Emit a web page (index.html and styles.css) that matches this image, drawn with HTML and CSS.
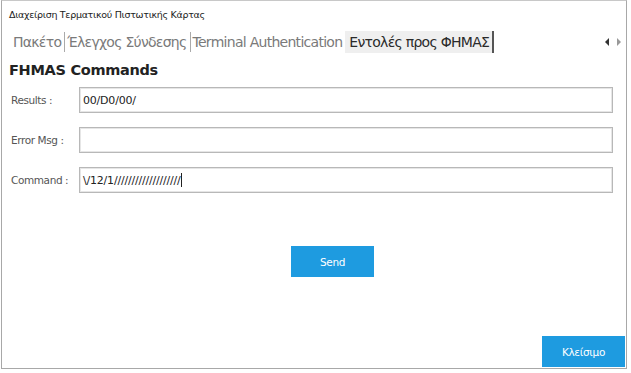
FILE: index.html
```html
<!DOCTYPE html>
<html lang="el">
<head>
  <meta charset="UTF-8" />
  <title>Διαχείριση Τερματικού Πιστωτικής Κάρτας</title>
  <link rel="stylesheet" href="styles.css">
</head>
<body>

  <div class="window">
    <div class="title">Διαχείριση Τερματικού Πιστωτικής Κάρτας</div>

    <div class="tabs">
      <span class="tab">Πακέτο</span>
      <span class="tab">Έλεγχος Σύνδεσης</span>
      <span class="tab">Terminal Authentication</span>
      <span class="tab active">Εντολές προς ΦΗΜΑΣ</span>
      <div class="tab-arrows">
        <svg width="6" height="8" viewBox="0 0 6 8"><path d="M5 0 L1 4 L5 8 Z" fill="#333" /></svg>
        <svg width="6" height="8" viewBox="0 0 6 8"><path d="M1 0 L5 4 L1 8 Z" fill="#999" /></svg>
      </div>
    </div>

    <main class="panel">
      <h2>FHMAS Commands</h2>
      <div class="form">
        <label>Results :</label>
        <div class="field">00/D0/00/</div>
        <label>Error Msg :</label>
        <div class="field"></div>
        <label>Command :</label>
        <div class="field">\/12/1///////////////////<span class="caret"></span></div>
      </div>
      <div class="send-row">
        <button class="btn">Send</button>
      </div>
    </main>

    <div class="footer">
      <button class="btn">Κλείσιμο</button>
    </div>
  </div>

</body>
</html>
```

FILE: styles.css
```css
body {
  margin: 0;
  font-family: 'DejaVu Sans', sans-serif;
  background-color: #fff;
  color: #333;
}
.window {
  margin: 0 4px 0 1px;
  height: 369px;
  border: 1px solid #a8a8a8;
  border-top-color: #c8c8c8;
  display: flex;
  flex-direction: column;
  box-sizing: border-box;
}
.title {
  font-size: 9.5px;
  letter-spacing: -0.3px;
  color: #222;
  padding: 8px 0 0 7px;
  height: 22px;
  box-sizing: border-box;
}
.tabs {
  display: flex;
  align-items: center;
  height: 22px;
  margin-top: 8px;
  padding-left: 11px;
  font-family: 'DejaVu Sans', sans-serif;
  font-size: 14px;
  letter-spacing: -0.72px;
  color: #7a7a7a;
}
.tab {
  line-height: 22px;
  padding: 0 3px 0 2px;
  border-right: 1px solid #aaa;
  height: 20px;
  display: flex;
  align-items: center;
}
.tab:first-child { padding-left: 0; }
.tab:nth-child(3) { border-right: none; }
.tab.active {
  background: #efefef;
  color: #2a2a2a;
  padding: 0 3px 0 4px;
  height: 22px;
  border-right: 2px solid #555;
}
.tab-arrows {
  margin-left: auto;
  margin-right: 4px;
  display: flex;
  gap: 6px;
}
.panel {
  flex: 1;
  padding: 0 13px 0 7px;
}
h2 {
  margin: 8px 0 0;
  font-size: 14.5px;
  letter-spacing: -0.3px;
  font-weight: bold;
  color: #222;
  line-height: 18px;
}
.form {
  display: grid;
  grid-template-columns: 70px 1fr;
  row-gap: 14px;
  align-items: center;
  margin-top: 8px;
}
.form label {
  padding-left: 2px;
  font-size: 10.5px;
  letter-spacing: -0.4px;
  color: #555;
}
.field {
  height: 26px;
  box-sizing: border-box;
  border: 1px solid #b8b8b8;
  box-shadow: inset 0 0 0 1px #e6e6e6;
  padding: 0 3px;
  font-size: 11px;
  letter-spacing: -0.2px;
  color: #222;
  display: flex;
  align-items: center;
}
.caret {
  display: inline-block;
  width: 1px;
  height: 14px;
  background: #222;
}
.send-row {
  display: flex;
  margin-top: 53px;
  padding-left: 282px;
}
.btn {
  width: 83px;
  height: 31px;
  border: none;
  background: #1e9be0;
  color: #fff;
  font-family: 'DejaVu Sans', sans-serif;
  font-size: 10.5px;
  letter-spacing: -0.3px;
}
.footer {
  display: flex;
  justify-content: flex-end;
  padding: 0 1px 1px 0;
}
```
